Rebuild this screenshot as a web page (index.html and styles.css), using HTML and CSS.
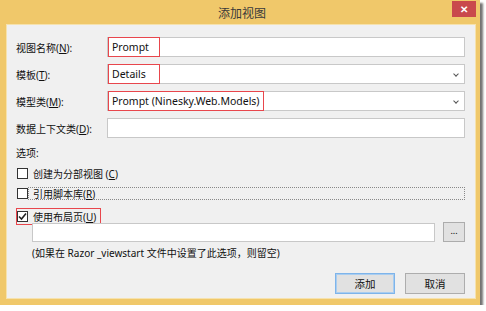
FILE: index.html
```html
<!DOCTYPE html>
<html lang="zh-CN">
<head>
  <meta charset="UTF-8" />
  <title>添加视图</title>
  <link rel="stylesheet" href="styles.css">
</head>
<body>
  <div class="window">
    <div class="titlebar">
      <span class="title">添加视图</span>
      <span class="close">&#10005;</span>
    </div>
    <div class="client">
      <div class="form-grid">
        <label class="lbl">视图名称(<u>N</u>):</label>
        <div class="field"><span class="mark mark-short">Prompt</span></div>

        <label class="lbl">模板(<u>T</u>):</label>
        <div class="field combo"><span class="mark mark-short">Details</span><span class="arrow"></span></div>

        <label class="lbl">模型类(<u>M</u>):</label>
        <div class="field combo"><span class="mark mark-long">Prompt (Ninesky.Web.Models)</span><span class="arrow"></span></div>

        <label class="lbl">数据上下文类(<u>D</u>):</label>
        <div class="field combo"></div>
      </div>

      <div class="options-title">选项:</div>

      <div class="check-row first">
        <span class="box"></span>
        <span>创建为分部视图 (<u>C</u>)</span>
      </div>
      <div class="check-row focused">
        <span class="box"></span>
        <span>引用脚本库(<u>R</u>)</span>
      </div>
      <div class="check-row">
        <span class="mark-check">
          <span class="box checked">
            <svg width="9" height="9" viewBox="0 0 9 9"><path d="M1 4.5 L3.5 7 L8 1.5" fill="none" stroke="#222" stroke-width="1.6"/></svg>
          </span>
          <span>使用布局页(<u>U</u>)</span>
        </span>
      </div>

      <div class="layout-row">
        <div class="field layout-input"></div>
        <button class="browse">...</button>
      </div>
      <div class="note">(如果在 Razor _viewstart 文件中设置了此选项，则留空)</div>

      <div class="actions">
        <button class="btn btn-default">添加</button>
        <button class="btn">取消</button>
      </div>
    </div>
  </div>
</body>
</html>
```

FILE: styles.css
```css
body {
  margin: 0;
  background: #fff;
  font-family: "Noto Sans", "Noto Sans CJK SC", sans-serif;
  font-size: 10px;
  color: #111;
}

.window {
  width: 480px;
  height: 305px;
  background: #f0c86a;
  box-shadow: 3px 3px 2px rgba(0,0,0,0.55);
  display: flex;
  flex-direction: column;
  box-sizing: border-box;
  padding: 0 4px 6px 6px;
}

.titlebar {
  position: relative;
  height: 24px;
  display: flex;
  justify-content: center;
  align-items: center;
}
.title {
  font-size: 12px;
  color: #3a3a3a;
  padding-top: 2px;
  padding-left: 2px;
}
.close {
  position: absolute;
  top: 1px;
  right: 0;
  width: 24px;
  height: 16px;
  background: #c9494c;
  color: #fff;
  font-size: 10px;
  font-weight: bold;
  display: flex;
  align-items: center;
  justify-content: center;
}

.client {
  flex: 1;
  background: #f0f0f0;
  border: 1px solid #f6e2ad;
  padding: 12px 10px 0 9px;
  display: flex;
  flex-direction: column;
}

.form-grid {
  display: grid;
  grid-template-columns: 91px 1fr;
  row-gap: 7px;
  align-items: center;
}
.lbl {
  white-space: nowrap;
}

.field {
  height: 20px;
  box-sizing: border-box;
  border: 1px solid #c8c8c8;
  background: #fff;
  display: flex;
  align-items: stretch;
  position: relative;
}
.combo .arrow {
  position: absolute;
  right: 6px;
  top: 7px;
  width: 3px;
  height: 3px;
  border-right: 1px solid #555;
  border-bottom: 1px solid #555;
  transform: rotate(45deg);
}

.mark {
  border: 1px solid #e8464c;
  margin: -1px 0 -1px 0;
  padding: 0 0 0 3px;
  display: flex;
  align-items: center;
  box-sizing: border-box;
  white-space: nowrap;
  font-size: 10.5px;
}
.mark-short { width: 52px; }
.mark-long { width: 156px; }

.options-title {
  margin-top: 7px;
  height: 16px;
  line-height: 16px;
}

.check-row {
  display: flex;
  align-items: center;
  height: 18px;
  margin-top: 3px;
  padding-left: 1px;
  gap: 5px;
  white-space: nowrap;
}
.check-row.first {
  margin-top: 3px;
}
.check-row.focused {
  margin-top: 5px;
  margin-left: 12px;
  padding-left: 0;
  border: 1px dotted #888;
  height: 11px;
  position: relative;
}
.check-row.focused .box {
  margin-left: -12px;
}
.box {
  width: 11px;
  height: 11px;
  box-sizing: border-box;
  border: 1px solid #333;
  background: #fff;
  display: flex;
  align-items: center;
  justify-content: center;
  flex-shrink: 0;
}
.mark-check {
  display: flex;
  align-items: center;
  gap: 5px;
  border: 1px solid #e8464c;
  height: 17px;
  padding: 0 4px 0 0;
  box-sizing: border-box;
  margin-left: -1px;
  margin-top: 8px;
}

.layout-row {
  display: flex;
  align-items: center;
  gap: 8px;
  margin-top: 1px;
  padding-left: 16px;
}
.layout-input {
  flex: 1;
  height: 19px;
}
.browse {
  width: 22px;
  height: 20px;
  border: 1px solid #acacac;
  background: #e1e1e1;
  font-size: 9px;
  padding: 0 0 4px;
  font-family: inherit;
}

.note {
  margin-top: 2px;
  padding-left: 16px;
  height: 18px;
  line-height: 18px;
}

.actions {
  margin-top: auto;
  margin-bottom: 4px;
  display: flex;
  justify-content: flex-end;
  gap: 10px;
}
.btn {
  width: 60px;
  height: 21px;
  border: 1px solid #adadad;
  background: #e1e1e1;
  font-family: inherit;
  font-size: 10.5px;
  color: #111;
  padding: 0;
}
.btn-default {
  border-color: #7eb4ea;
  box-shadow: inset 0 0 0 1px #a9cdf0;
}
```
